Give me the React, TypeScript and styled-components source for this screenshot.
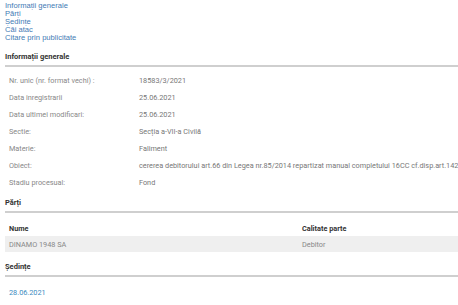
import styled, { createGlobalStyle } from "styled-components";

const Global = createGlobalStyle`
    html, body {
        margin: 0;
        padding: 0;
        background: #ffffff;
        overflow: hidden;
    }
    body {
        font-family: Roboto, "Liberation Sans", sans-serif;
        font-size: 7.3px;
        color: #777;
    }
`;

const Page = styled.div`
    width: 458px;
    height: 305px;
    overflow: hidden;
    padding: 2px 0 0 5px;
    box-sizing: border-box;
`;

const Nav = styled.div`
    display: flex;
    flex-direction: column;
`;

const NavLink = styled.a`
    color: #3f7bb5;
    font-family: "Liberation Sans", Arial, sans-serif;
    font-size: 7.6px;
    line-height: 8px;
    height: 8px;
    text-decoration: none;
`;

const Section = styled.div``;

interface IHeading {
    top: number;
}
const Heading = styled.div<IHeading>`
    margin-top: ${props => props.top}px;
    font-weight: 700;
    color: #333;
    font-size: 7.5px;
    line-height: 10px;
    padding-bottom: 3px;
    border-bottom: 2px solid #cfcfcf;
`;

const DetailList = styled.div`
    display: flex;
    flex-direction: column;
    padding: 5px 0 0 4px;
`;

const DetailRow = styled.div`
    display: flex;
    height: 17px;
    align-items: center;
    white-space: nowrap;
`;

const Label = styled.div`
    width: 130px;
    flex-shrink: 0;
    color: #888;
`;

const Value = styled.div`
    color: #777;
    white-space: nowrap;
`;

interface IGridRow {
    shaded?: boolean;
    bold?: boolean;
}
const GridRow = styled.div<IGridRow>`
    display: grid;
    grid-template-columns: 293px 1fr;
    height: 16px;
    align-items: center;
    padding-left: 4px;
    background: ${props => (props.shaded ? "#efefef" : "transparent")};
    color: ${props => (props.bold ? "#333" : "#888")};
    font-weight: ${props => (props.bold ? 700 : 400)};
`;

const Table = styled.div`
    padding-top: 7px;
`;

const DateLink = styled.a`
    display: block;
    color: #3a8ac0;
    padding: 11px 0 0 4px;
    text-decoration: none;
`;

const details: [string, string][] = [
    ["Nr. unic (nr. format vechi) :", "18583/3/2021"],
    ["Data inregistrarii", "25.06.2021"],
    ["Data ultimei modificari:", "25.06.2021"],
    ["Sectie:", "Secția a-VII-a Civilă"],
    ["Materie:", "Faliment"],
    ["Obiect:", "cererea debitorului art.66 din Legea nr.85/2014 repartizat manual completului 16CC cf.disp.art.142 alin.1 din HCSM 1375/2015"],
    ["Stadiu procesual:", "Fond"],
];

export default function App() {
    return (
        <>
            <Global />
            <Page>
                <Nav>
                    <NavLink href="#">Informații generale</NavLink>
                    <NavLink href="#">Părți</NavLink>
                    <NavLink href="#">Ședințe</NavLink>
                    <NavLink href="#">Căi atac</NavLink>
                    <NavLink href="#">Citare prin publicitate</NavLink>
                </Nav>
                <Section>
                    <Heading top={10}>Informații generale</Heading>
                    <DetailList>
                        {details.map(([label, value]) => (
                            <DetailRow key={label}>
                                <Label>{label}</Label>
                                <Value>{value}</Value>
                            </DetailRow>
                        ))}
                    </DetailList>
                </Section>
                <Section>
                    <Heading top={7}>Părți</Heading>
                    <Table>
                        <GridRow bold>
                            <div>Nume</div>
                            <div>Calitate parte</div>
                        </GridRow>
                        <GridRow shaded>
                            <div>DINAMO 1948 SA</div>
                            <div>Debitor</div>
                        </GridRow>
                    </Table>
                </Section>
                <Section>
                    <Heading top={10}>Ședințe</Heading>
                    <DateLink href="#">28.06.2021</DateLink>
                </Section>
            </Page>
        </>
    );
}
